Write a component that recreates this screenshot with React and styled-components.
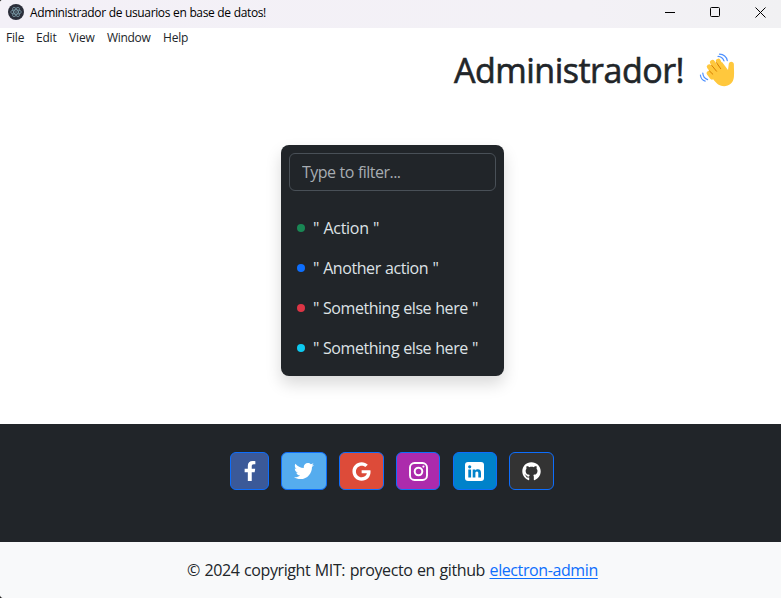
import React from "react";
import styled, { createGlobalStyle } from "styled-components";
import { FaFacebookF, FaTwitter, FaGoogle, FaGithub } from "react-icons/fa";

const GlobalStyle = createGlobalStyle`
  *, *::before, *::after { box-sizing: border-box; }
  html, body { margin: 0; background: #fff; overflow: hidden; }
  body { font-family: "Open Sans", "Noto Sans", sans-serif; color: #212529; }
`;

const Window = styled.div`
  width: 781px;
  height: 598px;
  display: flex;
  flex-direction: column;
  overflow: hidden;
  background: #fff;
  border-radius: 3px 0 0 4px;
`;
const Backdrop = styled.div`
  background: #222;
  width: 781px;
`;
const TitleBar = styled.header`
  height: 28px;
  flex: none;
  display: flex;
  align-items: center;
  background: linear-gradient(90deg, #f3f0f7, #f3f1f6 75%, #f1f1f3);
  padding-left: 8px;
`;
const WindowTitle = styled.span`
  margin: -2px 0 0 6px;
  flex: 1;
  font-size: 12px;
  line-height: 16px;
  letter-spacing: -0.37px;
  word-spacing: 0.25px;
  color: #000;
  white-space: nowrap;
`;
const AppIcon = styled.svg`
  width: 16px;
  height: 16px;
  margin-top: -4px;
`;
const Controls = styled.div`
  display: flex;
  height: 28px;
  margin-right: -2px;
`;
const ControlButton = styled.button`
  width: 45px;
  height: 25px;
  padding: 0;
  border: 0;
  background: none;
  color: #000;
  display: grid;
  place-items: center;
  svg { display: block; }
`;
const MenuBar = styled.nav`
  display: flex;
  flex: none;
  height: 20px;
  padding-left: 6px;
`;
const MenuItem = styled.span`
  width: ${(p) => p.$w}px;
  font-size: 12px;
  line-height: 20px;
  letter-spacing: ${(p) => p.$ls}px;
  white-space: nowrap;
`;
const Hero = styled.div`
  display: flex;
  flex: none;
  height: 97px;
  justify-content: flex-end;
  padding: 0 45px 0 0;
`;
const Heading = styled.h1`
  margin: 0;
  width: 245px;
  font-size: 34px;
  line-height: 45px;
  font-weight: 500;
  letter-spacing: -0.5px;
  -webkit-text-stroke: 0.6px #212529;
  white-space: nowrap;
`;
const Wave = styled.svg`
  width: 37px;
  height: 36px;
  margin-top: 5px;
`;
const Main = styled.main`
  flex: none;
  height: 279px;
  padding-left: 281px;
`;
const Card = styled.section`
  width: 223px;
  height: 231px;
  padding: 8px;
  border-radius: 8px;
  background: #212529;
  box-shadow: 0 8px 16px rgba(0, 0, 0, 0.15);
`;
const Filter = styled.input`
  display: block;
  width: 207px;
  height: 38px;
  padding: 0 12px;
  border: 1px solid #495057;
  border-radius: 6px;
  background: #212529;
  outline: 0;
  color: #dee2e6;
  font: 16px "Open Sans", "Noto Sans", sans-serif;
  letter-spacing: -0.52px;
  word-spacing: 0.4px;
  &::placeholder { color: #a7acb1; opacity: 1; }
`;
const List = styled.ul`
  margin: 17px 0 0;
  padding: 0 0 0 8px;
  list-style: none;
`;
const ListItem = styled.li`
  display: flex;
  align-items: center;
  gap: 8px;
  height: 40px;
  font-size: 16px;
  color: #dee2e6;
  letter-spacing: ${(p) => p.$ls}px;
  word-spacing: 0.45px;
  white-space: nowrap;
  &::before {
    content: "";
    width: 8px;
    height: 8px;
    border-radius: 50%;
    background: ${(p) => p.$dot};
  }
`;
const Social = styled.div`
  flex: none;
  height: 118px;
  display: flex;
  align-items: flex-start;
  padding: 28px 0 0 230px;
  background: #212529;
`;
const SocialLink = styled.a`
  width: ${(p) => p.$w}px;
  margin-right: ${(p) => p.$gap || 12}px;
  height: 38px;
  display: grid;
  place-items: center;
  padding-right: ${(p) => p.$inset ?? 1}px;
  border: 1px solid #0d6efd;
  border-radius: 6px;
  background: ${(p) => p.$bg};
  color: #fff;
`;
const Copyright = styled.footer`
  flex: 1;
  padding: 16px 0 0 187px;
  background: #f8f9fa;
  font-size: 16px;
  line-height: 24px;
  letter-spacing: -0.4px;
  word-spacing: 0.8px;
  white-space: nowrap;
`;
const ProjectLink = styled.a`
  color: #0d6efd;
  text-decoration: underline;
  text-underline-offset: 2px;
`;

const InstagramIcon = () => (
  <svg width="19" height="19" viewBox="0 0 19 19" fill="none" stroke="#fff">
    <rect x="1" y="1" width="17" height="17" rx="4.5" strokeWidth="1.9" />
    <circle cx="9.5" cy="9.5" r="3.8" strokeWidth="2" />
    <circle cx="14.4" cy="4.6" r="1.1" fill="#fff" stroke="none" />
  </svg>
);

const LinkedinIcon = () => (
  <svg width="19" height="19" viewBox="0 0 19 19">
    <rect width="19" height="19" rx="3" fill="#fff" />
    <circle cx="4.7" cy="4.8" r="1.6" fill="#0082ca" />
    <path d="M3.3 7.4h2.8v8.1H3.3zM7.7 7.4h2.6v1.1c.5-.8 1.4-1.3 2.6-1.3 2.3 0 3.1 1.5 3.1 3.7v4.6h-2.7v-4.1c0-1.1-.2-2-1.4-2s-1.5.9-1.5 2v4.1H7.7z" fill="#0082ca" />
  </svg>
);

const ElectronIcon = () => (
  <AppIcon viewBox="0 0 16 16">
    <circle cx="8" cy="8" r="8" fill="#2b2e3a" />
    <g fill="none" stroke="#8fb5c2" strokeWidth="0.6">
      <ellipse cx="8" cy="8" rx="5.3" ry="2.1" />
      <ellipse cx="8" cy="8" rx="5.3" ry="2.1" transform="rotate(60 8 8)" />
      <ellipse cx="8" cy="8" rx="5.3" ry="2.1" transform="rotate(120 8 8)" />
    </g>
    <circle cx="8" cy="8" r="0.7" fill="#8fb5c2" />
  </AppIcon>
);

const WavingHand = () => (
  <Wave viewBox="0 0 37 36">
    <g fill="none" stroke="#ffc83d" strokeLinecap="round" strokeWidth="5">
      <path d="M13 24L10.2 20.2" />
      <path d="M16 21L10.3 13.8" />
      <path d="M19 18L13.5 9.3" />
      <path d="M23 17L19.3 8.2" />
    </g>
    <path d="M10 21l5-8 8-4 6 8 .8-6.3c.5-3 5.2-2.6 5.1.8-.1 4 .5 7.3 0 12.5-.5 6-4.8 9.2-9.8 9.2-4.3 0-7-2.3-9.5-5.2z" fill="#ffc83d" />
    <g fill="none" stroke="#d67d00" strokeWidth="1" strokeLinecap="round">
      <path d="M10.5 18l3.3 3.2M12.7 12.4l4.8 5.8M17.5 9.7l4.2 6" />
    </g>
    <g fill="none" stroke="#5092ff" strokeWidth="1.2" strokeLinecap="round">
      <path d="M19 3.3c3.2.2 5.2 2 6 4.6M20.5 1.2c4.2.2 7 2.8 7.8 6.5M3.8 20c.1 3 1.7 5.4 4.8 6.6M1.4 22c.3 3 2 5.3 4.8 6.1" />
    </g>
  </Wave>
);

export default function App() {
  return (
    <>
      <GlobalStyle />
      <Backdrop>
        <Window>
          <TitleBar>
            <ElectronIcon />
            <WindowTitle>Administrador de usuarios en base de datos!</WindowTitle>
            <Controls>
              <ControlButton aria-label="Minimize">
                <svg width="11" height="11"><path d="M0 5.5h10" stroke="currentColor" /></svg>
              </ControlButton>
              <ControlButton aria-label="Maximize">
                <svg width="11" height="11"><rect x=".5" y=".5" width="9" height="9" rx="1" fill="none" stroke="currentColor" /></svg>
              </ControlButton>
              <ControlButton aria-label="Close">
                <svg width="11" height="11"><path d="M.5.5l10 10M10.5.5l-10 10" stroke="currentColor" /></svg>
              </ControlButton>
            </Controls>
          </TitleBar>
          <MenuBar>
            <MenuItem $w={30} $ls={-0.2}>File</MenuItem>
            <MenuItem $w={33} $ls={-0.2}>Edit</MenuItem>
            <MenuItem $w={38} $ls={-0.1}>View</MenuItem>
            <MenuItem $w={56} $ls={-0.3}>Window</MenuItem>
            <MenuItem $w={30} $ls={-0.2}>Help</MenuItem>
          </MenuBar>
          <Hero>
            <Heading>Administrador!</Heading>
            <WavingHand />
          </Hero>
          <Main>
            <Card>
              <Filter placeholder="Type to filter..." />
              <List>
                <ListItem $dot="#198754" $ls={-0.28}>" Action "</ListItem>
                <ListItem $dot="#0d6efd" $ls={-0.42}>" Another action "</ListItem>
                <ListItem $dot="#dc3545" $ls={-0.46}>" Something else here "</ListItem>
                <ListItem $dot="#0dcaf0" $ls={-0.46}>" Something else here "</ListItem>
              </List>
            </Card>
          </Main>
          <Social>
            <SocialLink $w={39} $inset={0} $bg="#3b5998"><FaFacebookF size={20} /></SocialLink>
            <SocialLink $w={46} $bg="#55acee"><FaTwitter size={20} /></SocialLink>
            <SocialLink $w={45} $bg="#dd4b39"><FaGoogle size={19} /></SocialLink>
            <SocialLink $w={44} $gap={13} $inset={0} $bg="#ac2bac"><InstagramIcon /></SocialLink>
            <SocialLink $w={44} $bg="#0082ca"><LinkedinIcon /></SocialLink>
            <SocialLink $w={45} $inset={0} $bg="#333333"><FaGithub size={19} /></SocialLink>
          </Social>
          <Copyright>
            © 2024 copyright MIT: proyecto en github <ProjectLink>electron-admin</ProjectLink>
          </Copyright>
        </Window>
      </Backdrop>
    </>
  );
}
